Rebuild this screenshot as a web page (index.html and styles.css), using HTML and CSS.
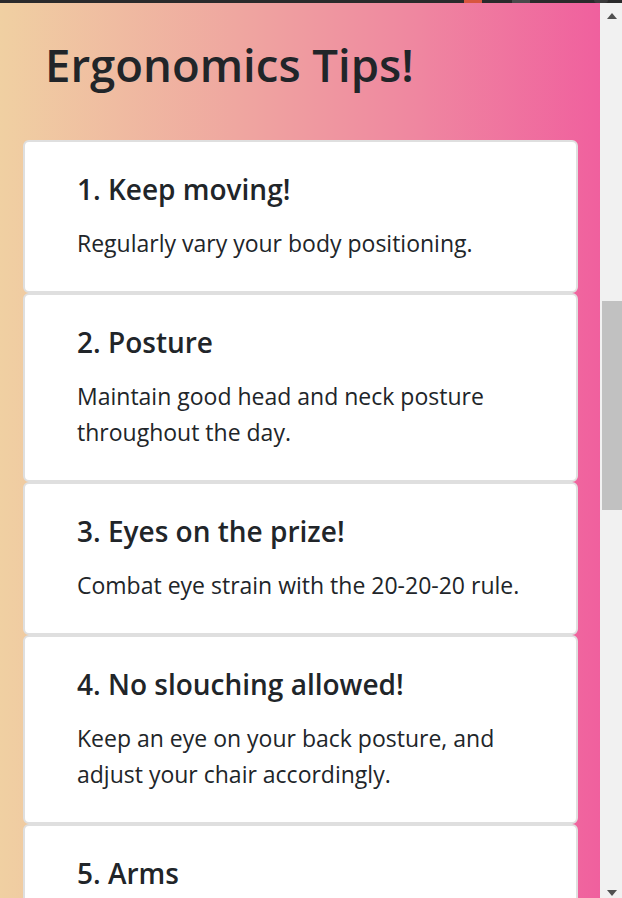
FILE: index.html
```html
<!DOCTYPE html>
<html lang="en">
<head>
<meta charset="utf-8">
<title>Ergonomics Tips!</title>
<link rel="stylesheet" href="styles.css">
</head>
<body>
<div class="topbar">
  <span class="mark mark-red"></span>
  <span class="mark mark-gray"></span>
  <span class="mark mark-dark"></span>
</div>
<div class="window">
  <main class="page">
    <h1 class="title">Ergonomics Tips!</h1>
    <div class="cards">
      <section class="card">
        <h5 class="card-title">1. Keep moving!</h5>
        <p class="card-text">Regularly vary your body positioning.</p>
      </section>
      <section class="card">
        <h5 class="card-title">2. Posture</h5>
        <p class="card-text">Maintain good head and neck posture throughout the day.</p>
      </section>
      <section class="card">
        <h5 class="card-title">3. Eyes on the prize!</h5>
        <p class="card-text">Combat eye strain with the 20-20-20 rule.</p>
      </section>
      <section class="card">
        <h5 class="card-title">4. No slouching allowed!</h5>
        <p class="card-text">Keep an eye on your back posture, and adjust your chair accordingly.</p>
      </section>
      <section class="card">
        <h5 class="card-title">5. Arms</h5>
        <p class="card-text">Keep your arms relaxed and supported while you type.</p>
      </section>
    </div>
  </main>
  <div class="scrollbar">
    <div class="arrow arrow-up"></div>
    <div class="track"><div class="thumb"></div></div>
    <div class="arrow arrow-down"></div>
  </div>
</div>
</body>
</html>
```
FILE: styles.css
```css
html, body {
  margin: 0;
  padding: 0;
  height: 898px;
  overflow: hidden;
}
body {
  font-family: "Open Sans", "Noto Sans", "Liberation Sans", sans-serif;
  color: #212529;
  background: #f1f1f1;
}
.topbar {
  height: 3px;
  background: #2a2a2b;
  display: flex;
}
.mark { display: block; height: 3px; }
.mark-red { width: 18px; margin-left: 464px; background: #d8563f; }
.mark-gray { width: 18px; margin-left: 30px; background: #4a4a4b; }
.mark-dark { width: 14px; margin-left: 64px; background: #3a3a3b; border-radius: 0 0 3px 3px; }

.window {
  display: flex;
  height: 895px;
}
.page {
  width: 600px;
  flex: 0 0 600px;
  height: 895px;
  overflow: hidden;
  background: linear-gradient(to right, #f0d0a2 0%, #efa6a0 40%, #ef86a0 70%, #f0609e 100%);
  padding: 0 22px 0 23px;
  box-sizing: border-box;
}
.title {
  margin: 31px 0 46px 22px;
  font-size: 45.5px;
  line-height: 60px;
  font-weight: 600;
}
.cards {
  display: flex;
  flex-direction: column;
}
.card {
  background: #fff;
  border: 2px solid #dfdfdf;
  border-radius: 6px;
  padding: 29px 30px 30px 52px;
}
.card-title {
  margin: 0 0 18px;
  font-size: 28px;
  line-height: 36px;
  font-weight: 600;
}
.card-text {
  margin: 0;
  font-size: 23px;
  line-height: 36px;
}

.scrollbar {
  width: 22px;
  flex: 0 0 22px;
  background: #f1f1f1;
  display: flex;
  flex-direction: column;
}
.arrow {
  height: 26px;
  display: flex;
  justify-content: center;
  padding-left: 2px;
  box-sizing: border-box;
}
.arrow-up { align-items: flex-start; padding-top: 10px; }
.arrow-down { align-items: flex-end; padding-bottom: 2px; }
.arrow-up::before {
  content: "";
  border-left: 5.5px solid transparent;
  border-right: 5.5px solid transparent;
  border-bottom: 6px solid #505050;
}
.arrow-down::before {
  content: "";
  border-left: 5.5px solid transparent;
  border-right: 5.5px solid transparent;
  border-top: 6px solid #505050;
}
.track {
  flex: 1;
  padding: 272px 0 0 2px;
}
.thumb {
  height: 209px;
  background: #c1c1c1;
}
```
